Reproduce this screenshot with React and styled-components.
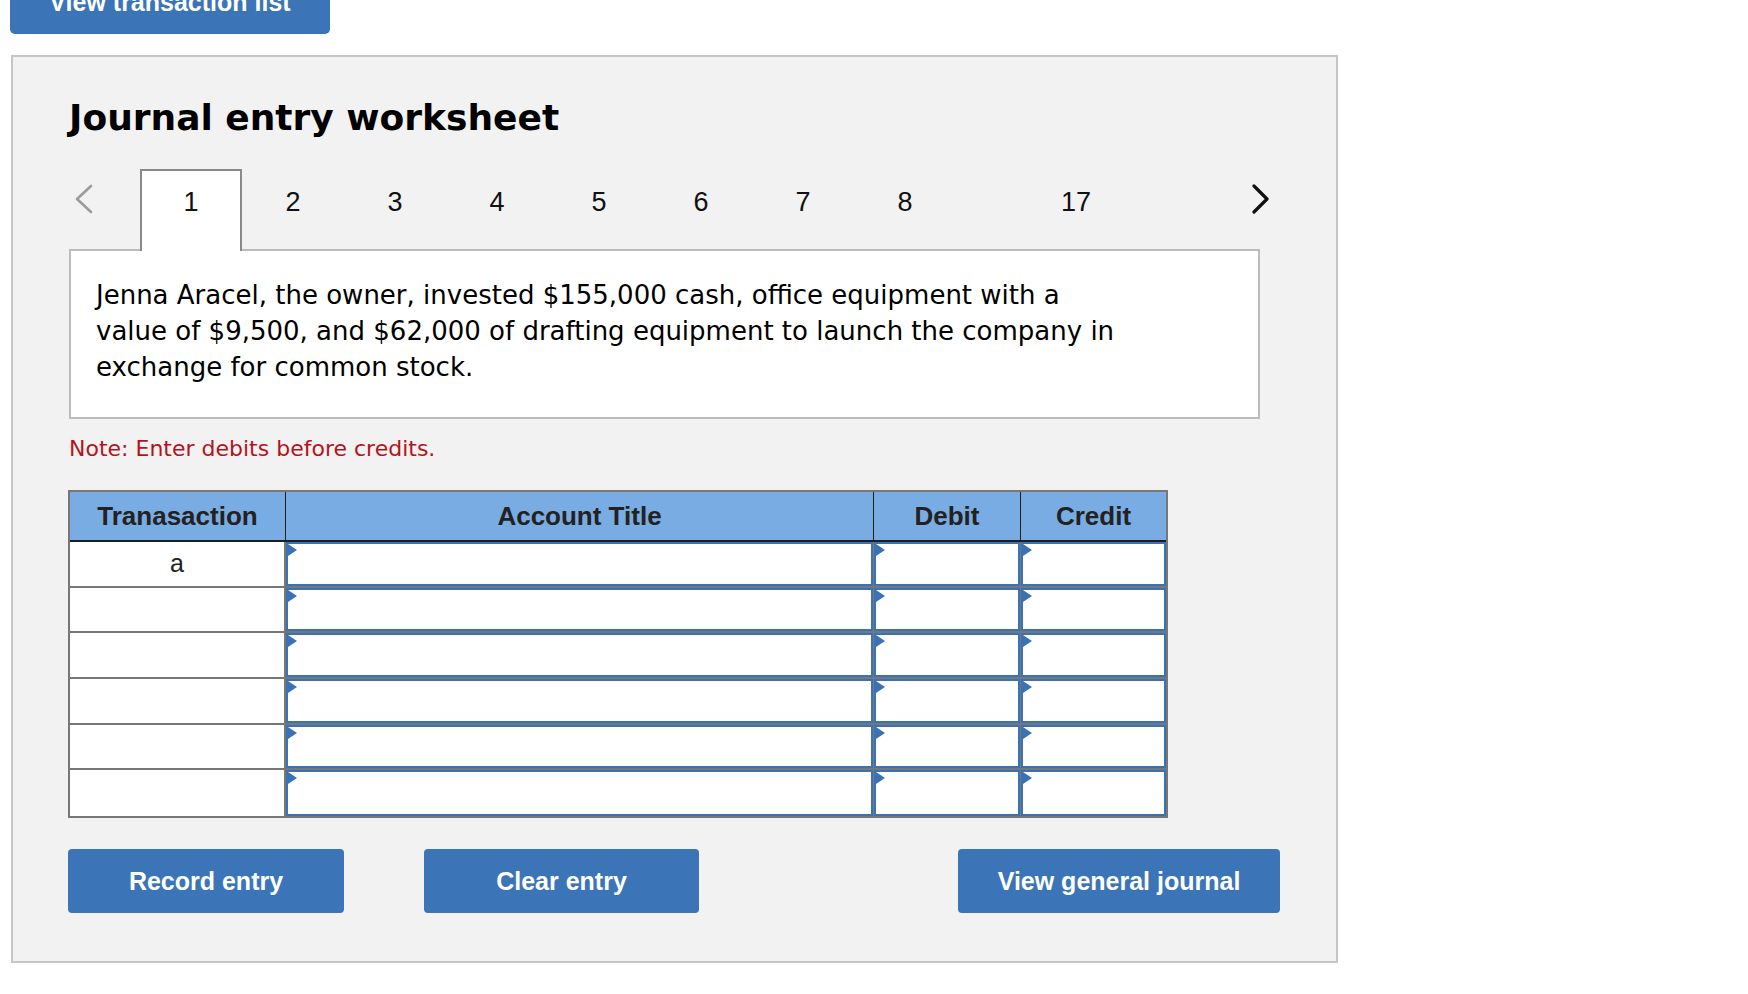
import React from "react";
import styled, { createGlobalStyle } from "styled-components";

const GlobalStyle = createGlobalStyle`
  html, body { margin: 0; padding: 0; background: #ffffff; }
  body { overflow: hidden; font-family: "Liberation Sans", Arial, sans-serif; }
`;

const Page = styled.div`
  padding-left: 10px;
  width: 1748px;
  height: 994px;
  box-sizing: border-box;
`;

const BlueButton = styled.button`
  display: flex;
  align-items: center;
  justify-content: center;
  flex: none;
  width: ${(p) => p.$w}px;
  height: 64px;
  margin-left: ${(p) => p.$ml || 0}px;
  padding: 0;
  border: none;
  border-radius: ${(p) => (p.$top ? "0 0 5px 5px" : "4px")};
  background: #3b75b7;
  color: #ffffff;
  font-family: "Liberation Sans", Arial, sans-serif;
  font-weight: 700;
  font-size: 25px;
  cursor: pointer;
`;

const TopButton = styled(BlueButton)`
  margin-top: -30px;
`;

const Panel = styled.section`
  margin-top: 21px;
  margin-left: 1px;
  width: 1327px;
  height: 908px;
  box-sizing: border-box;
  border: 2px solid #c6c6c6;
  background: #f2f2f2;
  padding: 40px 0 0 56px;
`;

const Title = styled.h1`
  margin: 0;
  font-family: "DejaVu Sans", Verdana, sans-serif;
  font-weight: 700;
  font-size: 36px;
  line-height: 42px;
  color: #000;
`;

const TabsRow = styled.div`
  margin-top: 30px;
  display: flex;
  align-items: flex-start;
  height: 80px;
`;

const ChevronBox = styled.div`
  flex: none;
  width: ${(p) => p.$w}px;
  margin-left: ${(p) => p.$ml || 0}px;
  padding-top: 15px;
  padding-left: ${(p) => p.$pl || 0}px;
  display: flex;
  box-sizing: border-box;
`;

const Tab = styled.div`
  position: relative;
  z-index: 1;
  flex: none;
  width: 102px;
  margin-left: ${(p) => p.$ml || 0}px;
  height: ${(p) => (p.$active ? 82 : 80)}px;
  margin-bottom: ${(p) => (p.$active ? -2 : 0)}px;
  box-sizing: border-box;
  padding-top: 16px;
  text-align: center;
  font-family: "Liberation Sans", Arial, sans-serif;
  font-size: 27px;
  line-height: 30px;
  color: #111;
  background: ${(p) => (p.$active ? "#ffffff" : "transparent")};
  border: 2px solid ${(p) => (p.$active ? "#8a8a8a" : "transparent")};
  border-bottom: none;
`;

const DescBox = styled.div`
  width: 1191px;
  height: 170px;
  box-sizing: border-box;
  border: 2px solid #bcbcbc;
  background: #ffffff;
  padding: 26px 25px 0 25px;
`;

const DescText = styled.p`
  margin: 0;
  max-width: 1030px;
  font-family: "DejaVu Sans", Verdana, sans-serif;
  font-size: 26px;
  line-height: 36px;
  color: #000;
`;

const Note = styled.p`
  margin: 17px 0 0 0;
  font-family: "DejaVu Sans", Verdana, sans-serif;
  font-size: 22px;
  line-height: 26px;
  color: #b5121b;
`;

const Table = styled.div`
  margin-top: 28px;
  margin-left: -1px;
  width: 1100px;
  box-sizing: border-box;
  border: 2px solid #777777;
  display: grid;
  grid-template-columns: 216px 588px 147px 145px;
  grid-template-rows: 50px;
  grid-auto-rows: 45.7px;
  background: #ffffff;
`;

const HeadCell = styled.div`
  display: flex;
  align-items: center;
  justify-content: center;
  background: #79ace2;
  border-bottom: 2px solid #1e1e1e;
  border-right: ${(p) => (p.$last ? "none" : "1px solid #1e1e1e")};
  box-sizing: border-box;
  font-family: "Liberation Sans", Arial, sans-serif;
  font-weight: 700;
  font-size: 26px;
  color: #222;
`;

const TxCell = styled.div`
  display: flex;
  align-items: center;
  justify-content: center;
  box-sizing: border-box;
  border-right: 2px solid #777777;
  border-bottom: ${(p) => (p.$last ? "none" : "2px solid #777777")};
  font-family: "Liberation Sans", Arial, sans-serif;
  font-size: 25px;
  color: #222;
  background: #fff;
`;

const InputCell = styled.div`
  box-sizing: border-box;
  border-right: ${(p) => (p.$lastCol ? "none" : "1px solid #777777")};
  border-bottom: ${(p) => (p.$last ? "none" : "2px solid #777777")};
  background: #fff;
`;

const Field = styled.div`
  position: relative;
  height: 100%;
  box-sizing: border-box;
  border: 2px solid #3a72b5;
  background: #ffffff;
  &::before {
    content: "";
    position: absolute;
    top: 0;
    left: 0;
    width: 0;
    height: 0;
    border-top: 6px solid transparent;
    border-bottom: 6px solid transparent;
    border-left: 9px solid #3a72b5;
  }
`;

const ButtonRow = styled.div`
  margin-top: 31px;
  margin-left: -1px;
  display: flex;
`;

const Chevron = ({ dir, color, width }) => (
  <svg width="20" height="30" viewBox="0 0 20 30">
    {dir === "left" ? (
      <polyline points="17,2 3,15 17,28" fill="none" stroke={color} strokeWidth={width} strokeLinecap="round" strokeLinejoin="round" />
    ) : (
      <polyline points="3,2 16,15 3,28" fill="none" stroke={color} strokeWidth={width} strokeLinecap="round" strokeLinejoin="round" />
    )}
  </svg>
);

const rows = ["a", "", "", "", "", ""];

export default function App() {
  return (
    <Page>
      <GlobalStyle />
      <TopButton $w={320} $top>View transaction list</TopButton>
      <Panel>
        <Title>Journal entry worksheet</Title>
        <TabsRow>
          <ChevronBox $w={71} $pl={5}>
            <Chevron dir="left" color="#9b9b9b" width={2.6} />
          </ChevronBox>
          <Tab $active>1</Tab>
          {["2", "3", "4", "5", "6", "7", "8"].map((n) => (
            <Tab key={n}>{n}</Tab>
          ))}
          <Tab $ml={69}>17</Tab>
          <ChevronBox $w={30} $ml={124}>
            <Chevron dir="right" color="#111" width={3.2} />
          </ChevronBox>
        </TabsRow>
        <DescBox>
          <DescText>
            Jenna Aracel, the owner, invested $155,000 cash, office equipment with a value of $9,500, and
            $62,000 of drafting equipment to launch the company in exchange for common stock.
          </DescText>
        </DescBox>
        <Note>Note: Enter debits before credits.</Note>
        <Table>
          <HeadCell>Tranasaction</HeadCell>
          <HeadCell>Account Title</HeadCell>
          <HeadCell>Debit</HeadCell>
          <HeadCell $last>Credit</HeadCell>
          {rows.map((r, i) => {
            const last = i === rows.length - 1;
            return (
              <React.Fragment key={i}>
                <TxCell $last={last}>{r}</TxCell>
                <InputCell $last={last}><Field /></InputCell>
                <InputCell $last={last}><Field /></InputCell>
                <InputCell $last={last} $lastCol><Field /></InputCell>
              </React.Fragment>
            );
          })}
        </Table>
        <ButtonRow>
          <BlueButton $w={276}>Record entry</BlueButton>
          <BlueButton $w={275} $ml={80}>Clear entry</BlueButton>
          <BlueButton $w={322} $ml={259}>View general journal</BlueButton>
        </ButtonRow>
      </Panel>
    </Page>
  );
}
